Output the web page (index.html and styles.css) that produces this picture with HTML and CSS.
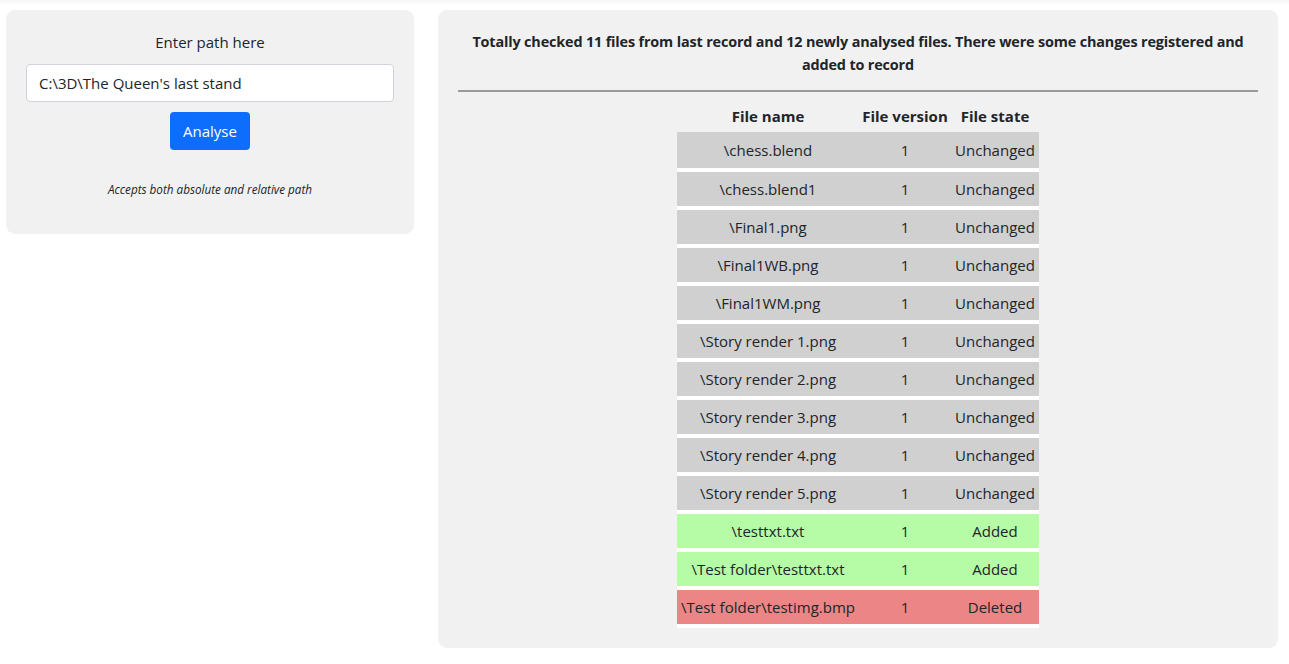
FILE: index.html
```html
<!DOCTYPE html>
<html lang="en">
<head>
<meta charset="utf-8">
<title>File analyser</title>
<link rel="stylesheet" href="styles.css">
</head>
<body>
<div class="topbar"></div>
<main class="layout">
  <section class="card input-card">
    <label class="label" for="path">Enter path here</label>
    <input id="path" class="path-input" type="text" value="C:\3D\The Queen's last stand">
    <button class="btn">Analyse</button>
    <p class="hint">Accepts both absolute and relative path</p>
  </section>
  <section class="card result-card">
    <p class="summary">Totally checked 11 files from last record and 12 newly analysed files. There were some changes registered and added to record</p>
    <hr class="rule">
    <table class="files">
      <colgroup><col class="c1"><col class="c2"><col class="c3"></colgroup>
      <thead>
        <tr><th>File name</th><th>File version</th><th>File state</th></tr>
      </thead>
      <tbody>
        <tr class="same"><td>\chess.blend</td><td>1</td><td>Unchanged</td></tr>
        <tr class="same"><td>\chess.blend1</td><td>1</td><td>Unchanged</td></tr>
        <tr class="same"><td>\Final1.png</td><td>1</td><td>Unchanged</td></tr>
        <tr class="same"><td>\Final1WB.png</td><td>1</td><td>Unchanged</td></tr>
        <tr class="same"><td>\Final1WM.png</td><td>1</td><td>Unchanged</td></tr>
        <tr class="same"><td>\Story render 1.png</td><td>1</td><td>Unchanged</td></tr>
        <tr class="same"><td>\Story render 2.png</td><td>1</td><td>Unchanged</td></tr>
        <tr class="same"><td>\Story render 3.png</td><td>1</td><td>Unchanged</td></tr>
        <tr class="same"><td>\Story render 4.png</td><td>1</td><td>Unchanged</td></tr>
        <tr class="same"><td>\Story render 5.png</td><td>1</td><td>Unchanged</td></tr>
        <tr class="added"><td>\testtxt.txt</td><td>1</td><td>Added</td></tr>
        <tr class="added"><td>\Test folder\testtxt.txt</td><td>1</td><td>Added</td></tr>
        <tr class="deleted"><td>\Test folder\testimg.bmp</td><td>1</td><td>Deleted</td></tr>
      </tbody>
    </table>
  </section>
</main>
</body>
</html>
```
FILE: styles.css
```css
* { box-sizing: border-box; }
html, body { margin: 0; padding: 0; background: #fff; }
body {
  font-family: "Open Sans", "Noto Sans", "Liberation Sans", sans-serif;
  font-size: 15px;
  color: #212529;
  line-height: 1.5;
}
.topbar {
  height: 4px;
  background: linear-gradient(#f6f6f6, #fdfdfd);
}
.layout {
  display: flex;
  align-items: flex-start;
  gap: 24px;
  padding: 6px 11px 0 6px;
}
.card {
  background: #f1f1f1;
  border-radius: 9px;
  padding: 20px;
}
.input-card {
  width: 408px;
  display: flex;
  flex-direction: column;
  align-items: center;
}
.label {
  display: block;
  line-height: 24px;
  height: 24px;
  margin-bottom: 10px;
}
.path-input {
  width: 100%;
  height: 38px;
  border: 1px solid #ced4da;
  border-radius: 4px;
  background: #fff;
  padding: 0 12px;
  font: inherit;
  color: #212529;
}
.btn {
  margin-top: 10px;
  width: 80px;
  height: 38px;
  border: none;
  border-radius: 4px;
  background: #0d6efd;
  color: #fff;
  font: inherit;
  font-size: 15px;
  cursor: pointer;
}
.hint {
  margin: 29px 0 15px;
  font-size: 11.7px;
  font-style: italic;
  line-height: 20px;
}
.result-card {
  flex: 1;
  display: flex;
  flex-direction: column;
  align-items: center;
  padding: 20px 20px 20px;
}
.summary {
  margin: 0;
  font-weight: bold;
  font-size: 14.4px;
  letter-spacing: -0.15px;
  line-height: 23px;
  text-align: center;
  padding: 0 8px;
}
.rule {
  align-self: stretch;
  margin: 14px 0 7px;
  border: 0;
  border-top: 2px solid #999;
}
.files {
  border-collapse: collapse;
  table-layout: fixed;
  width: 362px;
}
.c1 { width: 182px; }
.c2 { width: 92px; }
.c3 { width: 88px; }
.files th, .files td {
  text-align: center;
  padding: 0;
  white-space: nowrap;
}
.files th {
  height: 33px;
  font-weight: bold;
  font-size: 15px;
  padding-top: 1px;
}
.files td {
  height: 38px;
  border-bottom: 4px solid #fff;
  font-size: 15px;
}
.files tr.same td { background: #d0d0d0; }
.files tr.added td { background: #b6fca6; }
.files tr.deleted td { background: #ec8585; }
```
